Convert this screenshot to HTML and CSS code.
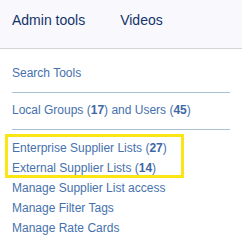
FILE: index.html
```html
<!DOCTYPE html>
<html>
<head>
<meta charset="utf-8">
<link rel="stylesheet" href="styles.css">
</head>
<body>
<nav class="tabs">
  <span class="tab">Admin tools</span>
  <span class="tab">Videos</span>
</nav>
<div class="menu">
  <div class="section first">
    <a class="item">Search Tools</a>
  </div>
  <div class="section">
    <a class="item">Local Groups (<b>17</b>) and Users (<b>45</b>)</a>
  </div>
  <div class="section last">
    <div class="highlight">
      <a class="item">Enterprise Supplier Lists (<b>27</b>)</a>
      <a class="item">External Supplier Lists (<b>14</b>)</a>
    </div>
    <a class="item">Manage Supplier List access</a>
    <a class="item">Manage Filter Tags</a>
    <a class="item">Manage Rate Cards</a>
  </div>
</div>
</body>
</html>
```

FILE: styles.css
```css
html, body {
  margin: 0;
  padding: 0;
  background: #ffffff;
  font-family: "Liberation Sans", Arial, sans-serif;
}

.tabs {
  box-sizing: border-box;
  height: 49px;
  display: flex;
  align-items: flex-start;
  gap: 35px;
  padding: 12px 0 0 12px;
  background: #f9f9fd;
  border-bottom: 1px solid #d4d4d8;
  font-size: 14px;
  line-height: 16px;
  color: #13336a;
}

.menu {
  padding: 0 12px;
}

.section {
  padding: 7px 0 9px;
  border-bottom: 1px solid #a9c0d4;
}

.section.first {
  padding-top: 14px;
}

.section.last {
  padding-top: 8px;
  border-bottom: none;
}

.item {
  display: block;
  font-size: 12px;
  line-height: 20px;
  color: #4671ad;
  text-decoration: none;
  white-space: nowrap;
}

.item b {
  font-weight: bold;
  color: #3e67a3;
}

.highlight {
  position: relative;
}

.highlight::after {
  content: "";
  position: absolute;
  left: -7px;
  top: -4px;
  width: 179px;
  height: 44px;
  box-sizing: border-box;
  border: 3px solid #fbe613;
  pointer-events: none;
}
```
